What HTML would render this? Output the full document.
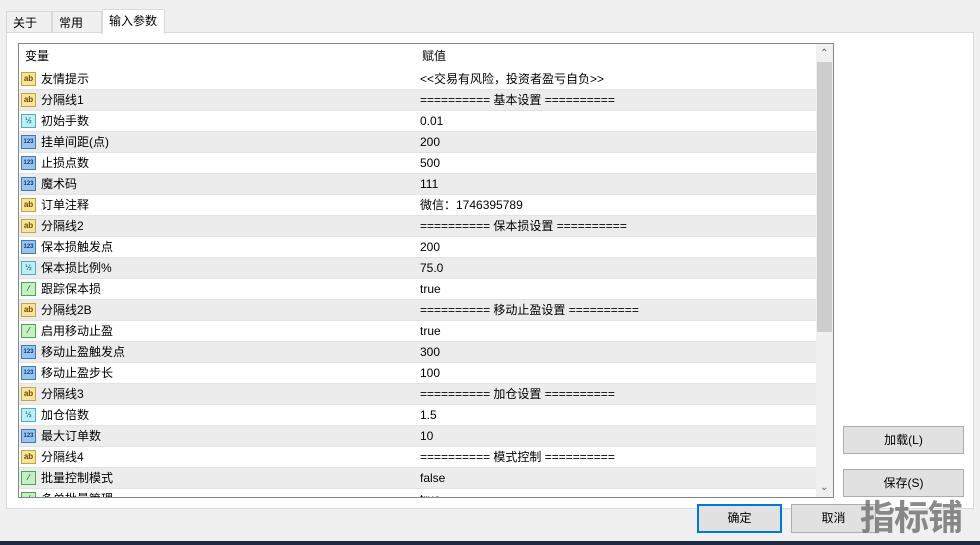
<!DOCTYPE html><html><head><meta charset="utf-8"><style>
*{margin:0;padding:0;box-sizing:border-box}
body{width:980px;height:545px;background:#f0f0f0;font:12px "Liberation Sans","Noto Sans CJK SC",sans-serif;color:#000;position:relative;overflow:hidden;line-height:16px}
.abs{position:absolute}
.tab{position:absolute;top:10px;height:23px;border:1px solid #d9d9d9;border-bottom:none;background:#f0f0f0;padding:3px 6px;line-height:16px}
.panel{position:absolute;left:6px;top:32px;width:968px;height:477px;background:#fff;border:1px solid #d9d9d9}
.list{position:absolute;left:18px;top:43px;width:816px;height:455px;border:1px solid #828790;background:#fff;overflow:hidden}
.row{position:absolute;left:0;width:797px;height:21px;border-bottom:1px solid #e3e3e3}
.row.g{background:#ececec}
.row span{position:absolute;top:0;line-height:20px;height:20px}
.n{left:22px}.v{left:401px}
.ic{position:absolute;left:2px;top:3px;width:15px;height:14px;border:1px solid;font-size:8px;line-height:12px;text-align:center;font-weight:bold}
.ab{background:#f6e49a;border-color:#c8a43c;color:#6b4b00}
.hf{background:#bfeef5;border-color:#4aaec4;color:#1e7e96}
.nm{background:#9cc3ea;border-color:#3d7abf;color:#0b3c7a;font-size:6px}
.ck{background:#c6efc6;border-color:#4aa84a;color:#1a7a1a}
.btn{position:absolute;background:#e1e1e1;border:1px solid #adadad;text-align:center;line-height:26px}
</style></head><body>
<div class="tab" style="left:6px;width:46px;top:11px">关于</div>
<div class="tab" style="left:52px;width:50px;top:11px">常用</div>
<div class="panel"></div>
<div class="tab" style="left:102px;width:63px;top:9px;height:25px;background:#fff;border-color:#d9d9d9">输入参数</div>
<div class="list">
<div class="abs" style="left:6px;top:4px;line-height:16px">变量</div>
<div class="abs" style="left:403px;top:4px;line-height:16px">赋值</div>
<div class="abs" style="left:797px;top:0;width:17px;height:453px;background:#f0f0f0"></div>
<div class="abs" style="left:798px;top:18px;width:15px;height:270px;background:#cdcdcd"></div>
<div class="abs" style="left:801px;top:2px;color:#606060;font-size:10px">&#8963;</div>
<div class="abs" style="left:801px;top:436px;color:#606060;font-size:10px">&#8964;</div>
<div id="rows"></div>
</div>
<div class="btn" style="left:843px;top:426px;width:121px;height:28px">加载(L)</div>
<div class="btn" style="left:843px;top:469px;width:121px;height:28px">保存(S)</div>
<div class="btn" style="left:697px;top:504px;width:85px;height:29px;border:2px solid #0078d7;line-height:25px">确定</div>
<div class="btn" style="left:791px;top:504px;width:85px;height:29px">取消</div>
<div class="abs" style="left:860px;top:499px;font-size:35px;line-height:40px;font-weight:bold;color:#6e6e6e;opacity:.8;letter-spacing:-1px">指标铺</div>
<div class="abs" style="left:0;top:541px;width:980px;height:4px;background:#1c2a44"></div>
<script>
var d=[["ab","友情提示","<<交易有风险，投资者盈亏自负>>"],["ab","分隔线1","========== 基本设置 =========="],["hf","初始手数","0.01"],["nm","挂单间距(点)","200"],["nm","止损点数","500"],["nm","魔术码","111"],["ab","订单注释","微信：1746395789"],["ab","分隔线2","========== 保本损设置 =========="],["nm","保本损触发点","200"],["hf","保本损比例%","75.0"],["ck","跟踪保本损","true"],["ab","分隔线2B","========== 移动止盈设置 =========="],["ck","启用移动止盈","true"],["nm","移动止盈触发点","300"],["nm","移动止盈步长","100"],["ab","分隔线3","========== 加仓设置 =========="],["hf","加仓倍数","1.5"],["nm","最大订单数","10"],["ab","分隔线4","========== 模式控制 =========="],["ck","批量控制模式","false"],["ck","多单批量管理","true"]];
var t={ab:"ab",hf:"½",nm:"123",ck:"⁄"};var h="";
d.forEach(function(r,i){h+='<div class="row'+(i%2?' g':'')+'" style="top:'+(25+21*i)+'px"><div class="ic '+r[0]+'">'+t[r[0]]+'</div><span class="n">'+r[1]+'</span><span class="v">'+r[2].replace(/</g,"&lt;").replace(/>/g,"&gt;")+'</span></div>'});
document.getElementById("rows").innerHTML=h;
</script>
</body></html>
